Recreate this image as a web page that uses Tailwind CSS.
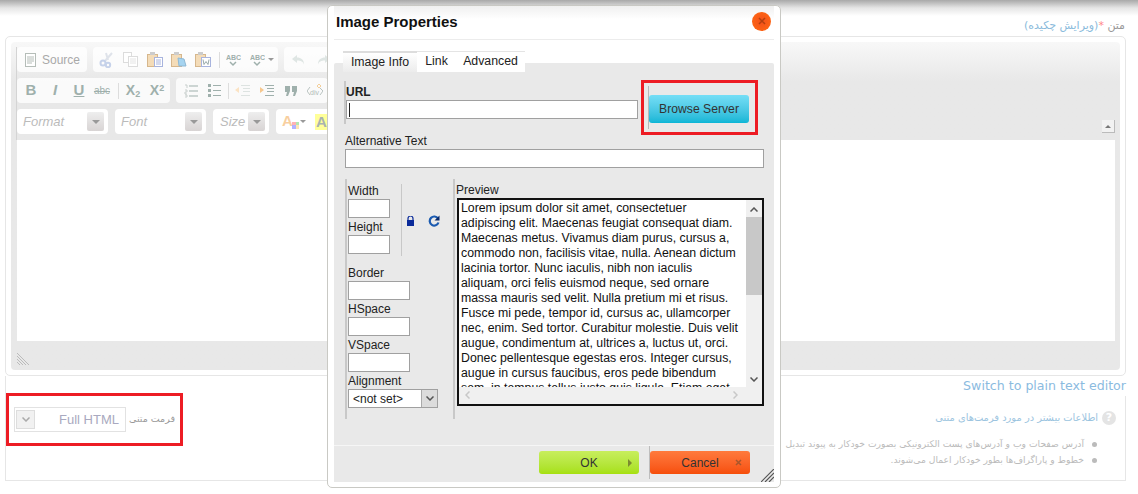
<!DOCTYPE html>
<html lang="fa">
<head>
<meta charset="UTF-8">
<title>Image Properties</title>
<script src="https://cdn.jsdelivr.net/npm/@tailwindcss/browser@4"></script>
</head>
<body class="relative w-[1138px] h-[494px] overflow-hidden bg-white font-['Liberation_Sans',sans-serif]">

<!-- top shadow -->
<div class="h-[16px] bg-gradient-to-b from-[#a9a9a9] via-[#e6e6e6] to-white"></div>

<!-- label -->
<div dir="rtl" class="h-[20px] pr-[13px] pt-[2px] text-[11px] leading-[16px] font-['DejaVu_Sans',sans-serif] text-[#999]">متن <span class="text-[#f88]">*</span><span class="text-[#8bbbdc]">(ویرایش چکیده)</span></div>

<!-- editor box -->
<div class="mx-[5px] w-[1121px] h-[340px] border border-[#e6e6e6] rounded-[5px] p-[5px]">
  <div class="h-[328px] rounded-[4px] bg-gradient-to-b from-[#f8f8f8] from-[0%] to-[#e8e8e8] to-[12%] pl-[5px] pr-[5px] pt-[5px] flex flex-col">
    <div class="relative h-[93px] border-l border-[#d4d4d4] flex flex-col gap-[6px] text-[#a9a9a9]">
      <!-- row 1 -->
      <div class="flex gap-[6px] h-[25px]">
        <div class="w-[70px] rounded-[4px] bg-white/80 flex items-center pl-[8px] gap-[6px] text-[12px]">
          <svg class="w-[11px] h-[14px]" viewBox="0 0 11 14"><rect x=".5" y=".5" width="10" height="13" fill="#fff" stroke="#b5bdb8"/><path d="M2 4h7M2 6h7M2 8h7M2 10h5" stroke="#b5bdb8"/></svg>
          Source
        </div>
        <div class="w-[185px] rounded-[4px] bg-white/80 flex items-center pl-[6px]">
          <div class="w-[24px]"><svg class="w-[15px] h-[16px]" viewBox="0 0 15 16"><path d="M13 1 6 9M7 1l2 7" stroke="#dfe3ea" stroke-width="2" fill="none"/><circle cx="4" cy="11" r="2.5" fill="none" stroke="#c6d2ea" stroke-width="2"/><circle cx="9" cy="13" r="2.2" fill="none" stroke="#c6d2ea" stroke-width="2"/></svg></div>
          <div class="w-[24px]"><svg class="w-[15px] h-[15px]" viewBox="0 0 15 15"><rect x=".5" y=".5" width="8" height="10" fill="#fff" stroke="#dcdcdc"/><rect x="5.5" y="4.5" width="9" height="10" fill="#fff" stroke="#dcdcdc"/><path d="M7 7h6M7 9h6M7 11h6" stroke="#e4e4e4"/></svg></div>
          <div class="w-[24px]"><svg class="w-[16px] h-[15px]" viewBox="0 0 16 15"><rect x=".5" y="2.5" width="10" height="12" fill="#f4dcb8" stroke="#d6b78d"/><rect x="3" y="0" width="5" height="3" fill="#ccc"/><rect x="7.5" y="5.5" width="8" height="9" fill="#fff" stroke="#a8b4de"/><path d="M9 8h5M9 10h5M9 12h5" stroke="#a8b4de"/></svg></div>
          <div class="w-[24px]"><svg class="w-[16px] h-[15px]" viewBox="0 0 16 15"><rect x=".5" y="2.5" width="10" height="12" fill="#f4dcb8" stroke="#d6b78d"/><rect x="3" y="0" width="5" height="3" fill="#ccc"/><path d="M7 6l6 1 2 7-7 0z" fill="#a6d4f0" stroke="#8fb8d4"/></svg></div>
          <div class="w-[24px]"><svg class="w-[16px] h-[15px]" viewBox="0 0 16 15"><rect x=".5" y="2.5" width="10" height="12" fill="#f4dcb8" stroke="#d6b78d"/><rect x="3" y="0" width="5" height="3" fill="#ccc"/><rect x="6.5" y="5.5" width="9" height="9" fill="#fff" stroke="#a8b4de"/><path d="M8 7.5l1 5 2-3 2 3 1-5" fill="none" stroke="#9aa"/></svg></div>
          <div class="w-[1px] h-[16px] bg-[#ddd] mr-[6px]"></div>
          <div class="w-[24px]"><svg class="w-[15px] h-[14px]" viewBox="0 0 15 14"><text x="0" y="7" font-size="7" font-weight="700" font-family="Liberation Sans" fill="#9fb0ac">ABC</text><path d="M4 9l3 3 3-3" fill="none" stroke="#9fb0ac" stroke-width="1.5"/></svg></div>
          <svg class="w-[15px] h-[14px]" viewBox="0 0 15 14"><text x="0" y="7" font-size="7" font-weight="700" font-family="Liberation Sans" fill="#9fb0ac">ABC</text><path d="M4 9l3 3 3-3" fill="none" stroke="#9fb0ac" stroke-width="1.5"/></svg>
          <div class="ml-[3px] border-x-[3px] border-x-transparent border-t-[3px] border-t-[#999]"></div>
        </div>
        <div class="w-[60px] rounded-[4px] bg-white/80 flex items-center pl-[7px] gap-[10px]">
          <svg class="w-[15px] h-[12px]" viewBox="0 0 15 12"><path d="M6 1 1 5l5 4V6.500c4 0 6 1 7 4 0-5-3-7-7-7z" fill="#dfe6e4"/></svg>
          <svg class="w-[15px] h-[12px]" viewBox="0 0 15 12"><path d="M9 1l5 4-5 4V6.500c-4 0-6 1-7 4 0-5 3-7 7-7z" fill="#dfe6e4"/></svg>
        </div>
      </div>
      <!-- row 2 -->
      <div class="flex gap-[6px] h-[25px]">
        <div class="w-[153px] rounded-[4px] bg-white/80 flex items-center pl-[2px] font-['Liberation_Sans',sans-serif] text-[#9fb0ac]">
          <div class="w-[24px] text-center font-bold text-[15px]">B</div>
          <div class="w-[24px] text-center font-bold italic text-[15px]">I</div>
          <div class="w-[24px] text-center font-bold text-[15px] underline">U</div>
          <div class="w-[22px] text-center text-[10px] line-through">abc</div>
          <div class="w-[1px] h-[16px] bg-[#ddd] ml-[5px] mr-[2px]"></div>
          <div class="w-[24px] text-center font-bold text-[14px]">X<sub class="text-[9px]">2</sub></div>
          <div class="w-[24px] text-center font-bold text-[14px]">X<sup class="text-[9px]">2</sup></div>
        </div>
        <div class="w-[152px] rounded-[4px] bg-white/80 flex items-center pl-[8px]">
          <div class="w-[24px]"><svg class="w-[14px] h-[14px]" viewBox="0 0 14 14"><path d="M5 2h9M5 7h9M5 12h9" stroke="#9fb0ac"/><path d="M1 1h2v3M1 6h2v2H1v2h2M1 11h2v2H1" fill="none" stroke="#c8cfcd"/></svg></div>
          <div class="w-[20px]"><svg class="w-[13px] h-[13px]" viewBox="0 0 13 13"><path d="M0 0h3v3H0zM0 5h3v3H0zM0 10h3v3H0z" fill="#9fb0ac"/><path d="M5 1.500h8M5 6.500h8M5 11.500h8" stroke="#9fb0ac"/></svg></div>
          <div class="w-[1px] h-[16px] bg-[#ddd] mr-[6px]"></div>
          <div class="w-[24px]"><svg class="w-[15px] h-[13px]" viewBox="0 0 15 13"><path d="M6 1.500h9M8 4.500h7M8 7.500h7M6 11.500h9" stroke="#dde3e1"/><path d="M0 6l4-3v6z" fill="#fbe3c4"/></svg></div>
          <div class="w-[26px]"><svg class="w-[15px] h-[13px]" viewBox="0 0 15 13"><path d="M6 1.500h9M8 4.500h7M8 7.500h7M6 11.500h9" stroke="#9fb0ac"/><path d="M5 6 1 3v6z" fill="#f6c88f"/></svg></div>
          <div class="w-[22px]"><svg class="w-[12px] h-[10px]" viewBox="0 0 12 10"><path d="M0 0h5v5l-2 5H1l1-4H0zM7 0h5v5l-2 5H8l1-4H7z" fill="#9fb0ac"/></svg></div>
          <svg class="w-[16px] h-[14px]" viewBox="0 0 16 14"><path d="M3 3 0 7l3 4M13 4l3 3-3 4" fill="none" stroke="#b8c2c0"/><text x="3" y="11" font-size="7" font-family="Liberation Sans" fill="#b0bab8">div</text><path d="m12 0 2 2-2 2-2-2z" fill="none" stroke="#f4cf9a"/></svg>
        </div>
      </div>
      <!-- row 3 -->
      <div class="flex gap-[7px] h-[25px] italic text-[13px] text-[#bbb]">
        <div class="w-[91px] rounded-[4px] bg-white flex items-center justify-between pl-[6px] pr-[4px]">Format<span class="w-[17px] h-[19px] rounded-[2px] bg-gradient-to-b from-[#eee] to-[#d8d4d4] flex items-center justify-center"><span class="border-x-[4px] border-x-transparent border-t-[4px] border-t-[#999]"></span></span></div>
        <div class="w-[91px] rounded-[4px] bg-white flex items-center justify-between pl-[6px] pr-[4px]">Font<span class="w-[17px] h-[19px] rounded-[2px] bg-gradient-to-b from-[#eee] to-[#d8d4d4] flex items-center justify-center"><span class="border-x-[4px] border-x-transparent border-t-[4px] border-t-[#999]"></span></span></div>
        <div class="w-[56px] rounded-[4px] bg-white flex items-center justify-between pl-[7px] pr-[4px]">Size<span class="w-[17px] h-[19px] rounded-[2px] bg-gradient-to-b from-[#eee] to-[#d8d4d4] flex items-center justify-center"><span class="border-x-[4px] border-x-transparent border-t-[4px] border-t-[#999]"></span></span></div>
        <div class="w-[60px] rounded-[4px] bg-white flex items-center pl-[6px] not-italic font-bold text-[15px]">
          <span class="text-[#f8cf9f] w-[11px]">A</span>
          <span class="grid grid-cols-2 w-[7px] h-[7px] mt-[7px] -ml-px"><i class="bg-[#f66]/50"></i><i class="bg-[#6c6]/50"></i><i class="bg-[#66f]/50"></i><i class="bg-[#fc6]/50"></i></span>
          <span class="ml-[1px] mr-[9px] border-x-[3px] border-x-transparent border-t-[3px] border-t-[#999]"></span>
          <span class="bg-[#ffff99] text-[#a9b2b0] px-[1px] leading-[16px]">A</span>
        </div>
      </div>
      <!-- collapse -->
      <div class="absolute right-[0px] top-[73px] w-[13px] h-[13px] border-r border-b border-[#bbb] bg-[#f2f2f2] flex items-center justify-center"><span class="border-x-[3px] border-x-transparent border-b-[3px] border-b-[#777]"></span></div>
    </div>
    <div class="h-[201px] ml-px bg-white"></div>
    <div class="flex-1 flex items-end pb-[5px] pl-px">
      <svg class="w-[12px] h-[12px]" viewBox="0 0 12 12"><path d="M0 3l9 9M0 6l6 6M0 9l3 3M0 0l12 12" stroke="#bbb"/></svg>
    </div>
  </div>
</div>

<!-- bottom box -->
<div class="relative mx-[5px] w-[1121px] h-[105px] border-x border-b border-[#e6e6e6] mb-0">
  <div class="absolute -right-px top-0 h-[20px] w-[170px] bg-white text-[12.6px] leading-[20px] font-['DejaVu_Sans',sans-serif] text-[#8bbbdf] whitespace-nowrap flex justify-end">Switch to plain text editor</div>
  <div dir="rtl" class="pt-[34px] font-['DejaVu_Sans',sans-serif] text-[9.2px] text-[#bbb]">
    <div class="flex items-center gap-[4px] h-[16px] pr-[9px] text-[9.9px] text-[#9cc4e0]">
      <span class="w-[14px] h-[14px] rounded-full bg-[#e4e4e4] text-white text-[11px] font-bold text-center leading-[14px]">?</span>
      <span class="whitespace-nowrap">اطلاعات بیشتر در مورد فرمت‌های متنی</span>
    </div>
    <div class="mt-[10px] flex items-center gap-[8px] pr-[28px] h-[16px] whitespace-nowrap"><span class="w-[5px] h-[5px] rounded-full bg-[#bbb]"></span>آدرس صفحات وب و آدرس‌های پست الکترونیکی بصورت خودکار به پیوند تبدیل</div>
    <div class="flex items-center gap-[8px] pr-[28px] h-[16px] whitespace-nowrap"><span class="w-[5px] h-[5px] rounded-full bg-[#bbb]"></span>خطوط و پاراگراف‌ها بطور خودکار اعمال می‌شوند.</div>
  </div>
  <!-- text format, red box -->
  <div class="absolute left-0 top-[17px] w-[177px] h-[53px] border-[3px] border-[#ed1c24] flex items-center pl-[5px] gap-[3px]">
    <div class="w-[112px] h-[25px] border border-[#e2e2e2] flex items-center justify-between pl-[1px] pr-[6px] text-[#a9a9c0] text-[13px]">
      <span class="w-[19px] h-[19px] border border-[#ddd] bg-[#f1f1f1] flex items-center justify-center"><svg class="w-[8px] h-[5px]" viewBox="0 0 8 5"><path d="M.5.500 4 4 7.500.500" fill="none" stroke="#aaa" stroke-width="1.500"/></svg></span>
      Full HTML
    </div>
    <span dir="rtl" class="text-[9.5px] font-['DejaVu_Sans',sans-serif] text-[#999] whitespace-nowrap">فرمت متنی</span>
  </div>
</div>

<!-- dialog -->
<div class="absolute left-[327px] top-[5px] w-[454px] h-[483px] bg-white rounded-[5px] border border-[#c9c9c4] text-[12px] text-[#222] flex flex-col px-[6px]">
  <div class="h-[34px] border-b border-[#ececec] flex items-center justify-between pl-[2px] pr-[3px] bg-gradient-to-b from-[#f0f0f0] to-white to-40%">
    <span class="font-bold text-[15px] text-[#111]">Image Properties</span>
    <span class="w-[19px] h-[19px] mb-[3px] rounded-full bg-radial from-[#f4501a] to-[#ff6a10] flex items-center justify-center"><svg class="w-[8px] h-[8px]" viewBox="0 0 8 8"><path d="M1 1l6 6M7 1 1 7" stroke="#b5400f" stroke-width="1.500"/></svg></span>
  </div>

  <!-- tabs -->
  <div class="relative h-[23px] mt-[11px] pl-[9px] flex text-[12.3px] leading-[19px] z-10">
    <div class="w-[74px] h-[21px] border-t-2 border-[#ddd] bg-gradient-to-b from-white to-[#ececec] text-center">Image Info</div>
    <div class="w-[39px] h-[21px] border-t border-[#e4e4e4] bg-white text-center">Link</div>
    <div class="w-[69px] h-[21px] border-t border-[#e4e4e4] bg-white text-center">Advanced</div>
  </div>

  <!-- panel -->
  <div class="-mt-[11px] h-[382px] bg-[#e9e9e9] rounded-t-[2px] pl-[11px] pt-[18px] relative">
    <!-- url row -->
    <div class="flex h-[43px]">
      <div class="w-[303px] border-l-2 border-[#c8c8c8] -ml-px">
        <div class="font-bold leading-[13px] pt-[5px] h-[19px]">URL</div>
        <div class="w-[292px] h-[19px] border border-[#a0a0a0] bg-white pl-[2px] flex items-center"><span class="w-px h-[14px] bg-[#222]"></span></div>
      </div>
      <div class="relative ml-[1px] border-l border-[#b8b8b8] h-[43px] mt-[5px]">
        <div class="mt-[9px] w-[100px] h-[28px] rounded-[3px] bg-gradient-to-b from-[#74def6] to-[#08b6d6] flex items-center justify-center text-[12.2px] text-[#333]">Browse Server</div>
      </div>
    </div>
    <!-- alt -->
    <div class="mt-[10px] leading-[14px]">Alternative Text</div>
    <div class="mt-[1px] w-[419px] h-[19px] border border-[#a0a0a0] bg-white"></div>

    <!-- size + preview -->
    <div class="flex mt-[11px] h-[240px]">
      <div class="w-[108px] h-[240px] border-l-2 border-[#c8c8c8] pl-[1px] pt-[5px] leading-[14px]">
        <div class="flex h-[72px]">
          <div class="w-[53px]">
            <div>Width</div>
            <div class="w-[42px] h-[19px] border border-[#a0a0a0] bg-white mt-[1px] mb-[2px]"></div>
            <div>Height</div>
            <div class="w-[42px] h-[19px] border border-[#a0a0a0] bg-white mt-[1px]"></div>
          </div>
          <div class="w-px h-[72px] bg-[#c8c8c8]"></div>
          <div class="flex items-center pl-[4px] gap-[13px] pt-[2px]">
            <svg class="w-[9px] h-[10px]" viewBox="0 0 9 10"><path d="M2 4V2.500a2.500 2.500 0 0 1 5 0V4" fill="none" stroke="#0a2a9a" stroke-width="1.200"/><rect x="1" y="4" width="7" height="6" fill="#0a2a9a"/></svg>
            <svg class="w-[12px] h-[12px]" viewBox="0 0 12 12"><path d="M10 3.500A4.500 4.500 0 1 0 10.500 7.500" fill="none" stroke="#1a5ab0" stroke-width="2.200"/><path d="M11.500 .5v5h-5z" fill="#0a2a6a"/></svg>
          </div>
        </div>
        <div class="mt-[10px]">Border</div>
        <div class="w-[62px] h-[19px] border border-[#a0a0a0] bg-white mt-[1px] mb-[2px]"></div>
        <div>HSpace</div>
        <div class="w-[62px] h-[19px] border border-[#a0a0a0] bg-white mt-[1px] mb-[2px]"></div>
        <div>VSpace</div>
        <div class="w-[62px] h-[19px] border border-[#a0a0a0] bg-white mt-[1px] mb-[2px]"></div>
        <div>Alignment</div>
        <div class="w-[90px] h-[19px] border border-[#a0a0a0] bg-white mt-[1px] flex items-center justify-between pl-[4px]">&lt;not set&gt;<span class="w-[16px] h-[17px] bg-[#dcdcdc] border-l border-[#aaa] flex items-center justify-center"><svg class="w-[8px] h-[5px]" viewBox="0 0 8 5"><path d="M.5.500 4 4 7.500.500" fill="none" stroke="#555" stroke-width="1.500"/></svg></span></div>
      </div>
      <div class="border-l-2 border-[#c8c8c8] pl-[1px] pt-[4px]">
        <div class="leading-[14px]">Preview</div>
        <div class="relative w-[307px] h-[208px] border-2 border-[#111] bg-[#f0f0f0] ml-[1px] mt-[1px] overflow-hidden">
          <div class="h-[187px] w-[287px] bg-white pl-[2px] pt-[1px] leading-[15px] text-[12.3px] text-[#111] overflow-hidden whitespace-nowrap">
            Lorem ipsum dolor sit amet, consectetuer<br>
            adipiscing elit. Maecenas feugiat consequat diam.<br>
            Maecenas metus. Vivamus diam purus, cursus a,<br>
            commodo non, facilisis vitae, nulla. Aenean dictum<br>
            lacinia tortor. Nunc iaculis, nibh non iaculis<br>
            aliquam, orci felis euismod neque, sed ornare<br>
            massa mauris sed velit. Nulla pretium mi et risus.<br>
            Fusce mi pede, tempor id, cursus ac, ullamcorper<br>
            nec, enim. Sed tortor. Curabitur molestie. Duis velit<br>
            augue, condimentum at, ultrices a, luctus ut, orci.<br>
            Donec pellentesque egestas eros. Integer cursus,<br>
            augue in cursus faucibus, eros pede bibendum<br>
            sem, in tempus tellus justo quis ligula. Etiam eget
          </div>
          <!-- scrollbars -->
          <div class="absolute right-0 top-0 w-[16px] h-[187px] bg-[#f0f0f0]">
            <svg class="absolute left-[4px] top-[7px] w-[8px] h-[5px]" viewBox="0 0 8 5"><path d="M.5 4.500 4 1l3.500 3.500" fill="none" stroke="#555" stroke-width="1.500"/></svg>
            <div class="absolute top-[17px] w-[16px] h-[78px] bg-[#c8c8c8]"></div>
            <svg class="absolute left-[4px] top-[177px] w-[8px] h-[5px]" viewBox="0 0 8 5"><path d="M.5.500 4 4 7.500.500" fill="none" stroke="#555" stroke-width="1.500"/></svg>
          </div>
          <svg class="absolute left-[6px] top-[191px] w-[5px] h-[8px]" viewBox="0 0 5 8"><path d="M4.500.5 1 4l3.500 3.500" fill="none" stroke="#c8c8c8" stroke-width="1.500"/></svg>
          <svg class="absolute left-[274px] top-[191px] w-[5px] h-[8px]" viewBox="0 0 5 8"><path d="M.5.500 4 4 .5 7.500" fill="none" stroke="#c8c8c8" stroke-width="1.500"/></svg>
        </div>
      </div>
    </div>
  </div>

  <!-- footer -->
  <div class="relative h-[37px] bg-[#e9e9e9] border-t border-[#f6f6f6] flex pl-[205px] pt-[5px]">
    <div class="w-[100px] h-[23px] rounded-[3px] bg-gradient-to-b from-[#c8ee5c] to-[#a6e00c] flex items-center justify-center text-[#333] relative">OK<span class="absolute right-[7px] border-y-[4px] border-y-transparent border-l-[4px] border-l-[#7c8a30]"></span></div>
    <div class="w-px h-[33px] -mt-[5px] bg-[#bdbdbd] ml-[10px]"></div>
    <div class="w-[100px] h-[23px] rounded-[3px] bg-gradient-to-b from-[#ff7a3c] to-[#f64e08] flex items-center justify-center text-[#333] relative">Cancel<svg class="absolute right-[8px] w-[7px] h-[7px]" viewBox="0 0 7 7"><path d="M1 1l5 5M6 1 1 6" stroke="#a8562c" stroke-width="1.500"/></svg></div>
    <svg class="absolute right-[0px] bottom-[0px] w-[13px] h-[13px]" viewBox="0 0 13 13"><path d="M0 13 13 0M4 13l9-9M8 13l5-5" stroke="#555" stroke-width="1.200"/></svg>
  </div>
</div>

<!-- red box round Browse Server -->
<div class="absolute left-[641px] top-[80px] w-[117px] h-[55px] border-[3px] border-[#ed1c24]"></div>

</body>
</html>
